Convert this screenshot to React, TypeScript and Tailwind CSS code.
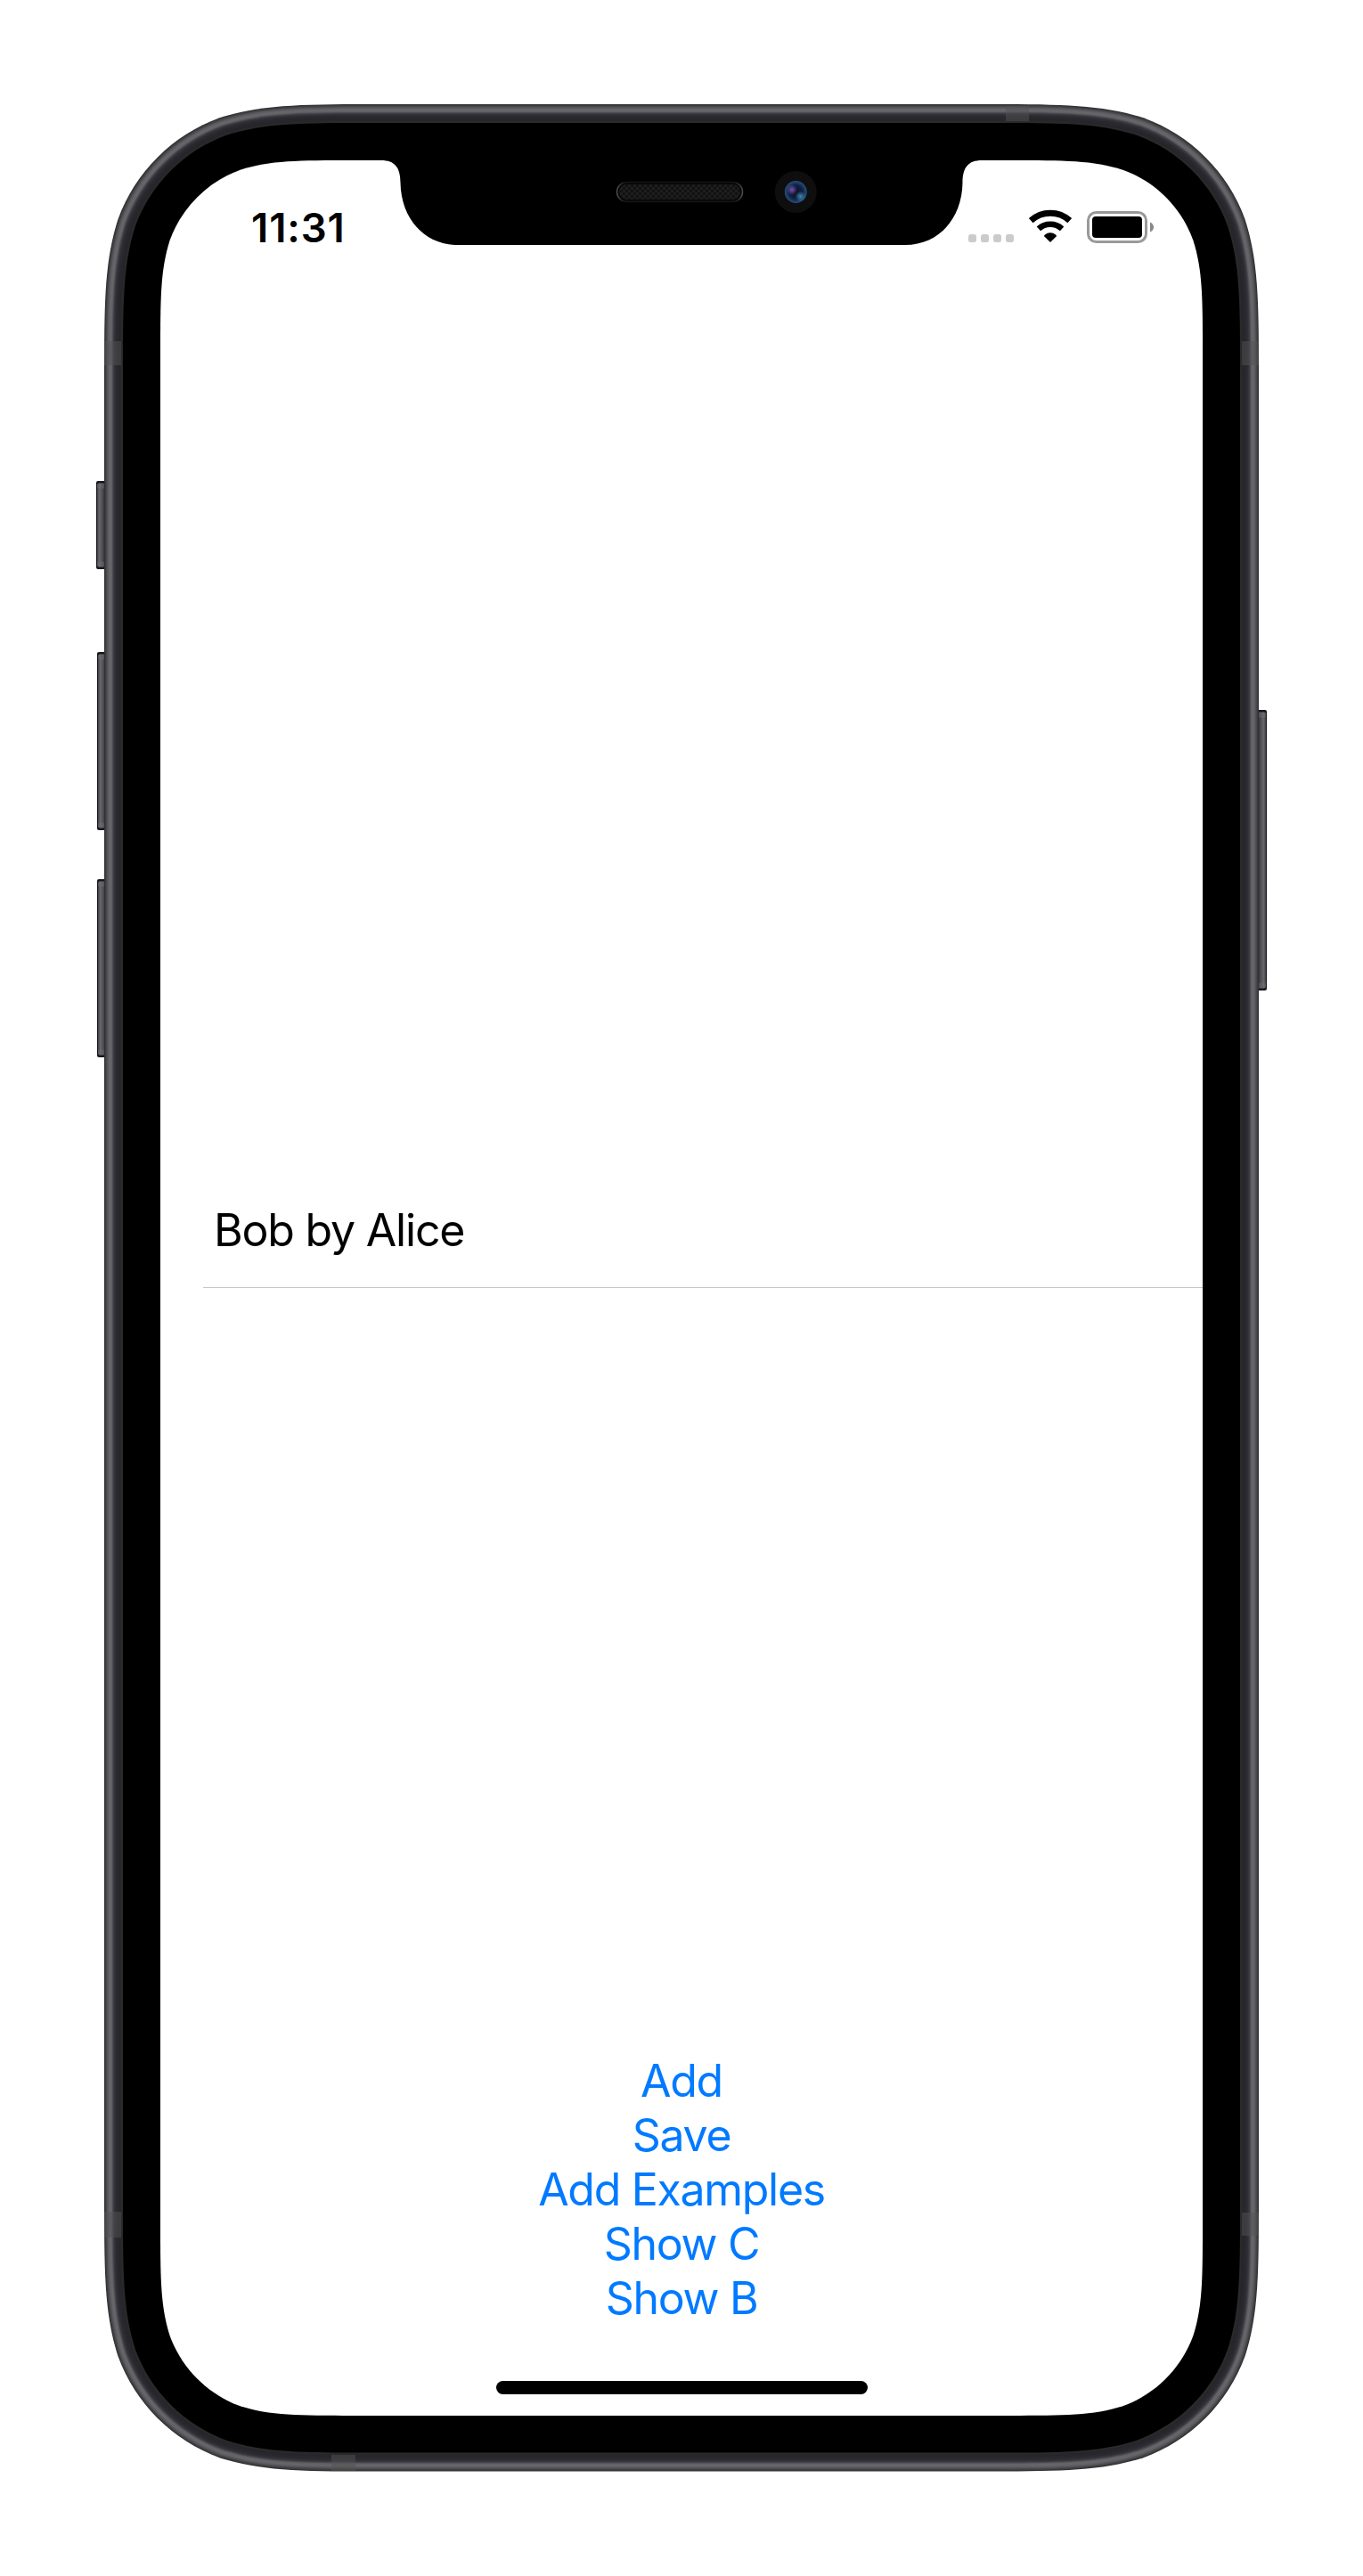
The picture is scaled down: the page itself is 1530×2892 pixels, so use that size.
import React from "react";

/** Rounded rectangle with continuous-curvature corners. */
function squircle(x: number, y: number, w: number, h: number, r: number) {
  const a = 1.52866 * r, b = 1.08849 * r, c = 0.86841 * r, d = 0.63149 * r;
  const e = 0.37282 * r, f = 0.16906 * r, g = 0.07491 * r;
  const R = x + w, B = y + h;
  return [
    `M${x + a} ${y}L${R - a} ${y}`,
    `C${R - b} ${y} ${R - c} ${y} ${R - d} ${y + g}`,
    `C${R - e} ${y + f} ${R - f} ${y + e} ${R - g} ${y + d}`,
    `C${R} ${y + c} ${R} ${y + b} ${R} ${y + a}L${R} ${B - a}`,
    `C${R} ${B - b} ${R} ${B - c} ${R - g} ${B - d}`,
    `C${R - f} ${B - e} ${R - e} ${B - f} ${R - d} ${B - g}`,
    `C${R - c} ${B} ${R - b} ${B} ${R - a} ${B}L${x + a} ${B}`,
    `C${x + b} ${B} ${x + c} ${B} ${x + d} ${B - g}`,
    `C${x + e} ${B - f} ${x + f} ${B - e} ${x + g} ${B - d}`,
    `C${x} ${B - c} ${x} ${B - b} ${x} ${B - a}L${x} ${y + a}`,
    `C${x} ${y + b} ${x} ${y + c} ${x + g} ${y + d}`,
    `C${x + f} ${y + e} ${x + e} ${y + f} ${x + d} ${y + g}`,
    `C${x + c} ${y} ${x + b} ${y} ${x + a} ${y}Z`,
  ].join("");
}

/** Metal rim shades, from the outer edge inwards, one per pixel. */
const RIM = [
  "#313133", "#3d3c3f", "#474649", "#525155", "#5c5b60", "#636267", "#67666b", "#66656a",
  "#5f5e63", "#4d4c51", "#3d3c41", "#35343a", "#2f2e34", "#2c2b31", "#2a2930", "#29282f",
  "#28272d", "#27262c", "#27272a", "#2b2b2b", "#2a2a29", "#000000",
];

const ring = (t: number) => squircle(117 + t, 117 + t, 1296 - 2 * t, 2657.5 - 2 * t, 205 - t);

function SideButton({ x, y, h, flip }: { x: number; y: number; h: number; flip?: boolean }) {
  return (
    <g transform={flip ? `translate(${x + 9} ${y}) scale(-1 1)` : `translate(${x} ${y})`}>
      <path d={`M12 0H2Q0 0 0 2V${h - 2}Q0 ${h} 2 ${h}H12Z`} fill="#17171b" />
      <rect x="1" y="2.5" width="10" height={h - 5} rx="2" fill="url(#button)" />
      <rect x="1" y="2.5" width="10" height="6" rx="2" fill="#77767b" opacity="0.35" />
      <rect x="1" y={h - 8.5} width="10" height="6" rx="2" fill="#77767b" opacity="0.35" />
    </g>
  );
}

function PhoneBody() {
  return (
    <svg className="absolute inset-0" width="1530" height="2892" viewBox="0 0 1530 2892" aria-hidden="true">
      <defs>
        <linearGradient id="button" x1="0" x2="1" y1="0" y2="0">
          <stop offset="0" stopColor="#3f3f43" />
          <stop offset="0.25" stopColor="#66656a" />
          <stop offset="0.5" stopColor="#56555a" />
          <stop offset="0.8" stopColor="#38373c" />
        </linearGradient>
        <pattern id="mesh" width="6" height="6" patternUnits="userSpaceOnUse">
          <rect width="6" height="6" fill="#121212" />
          <rect width="3" height="3" fill="#1e1e1e" />
          <rect x="3" y="3" width="3" height="3" fill="#1e1e1e" />
        </pattern>
        <linearGradient id="grille" x1="0" x2="1" y1="0" y2="0">
          <stop offset="0" stopColor="#4c4c4c" />
          <stop offset="0.06" stopColor="#141414" />
          <stop offset="0.94" stopColor="#141414" />
          <stop offset="1" stopColor="#4c4c4c" />
        </linearGradient>
        <radialGradient id="lens">
          <stop offset="0" stopColor="#0b1024" />
          <stop offset="0.6" stopColor="#10203f" />
          <stop offset="1" stopColor="#27507f" />
        </radialGradient>
        <radialGradient id="violet">
          <stop offset="0" stopColor="#7a4fb0" />
          <stop offset="1" stopColor="#7a4fb0" stopOpacity="0" />
        </radialGradient>
        <radialGradient id="cyan">
          <stop offset="0" stopColor="#3f86ad" />
          <stop offset="1" stopColor="#3f86ad" stopOpacity="0" />
        </radialGradient>
      </defs>

      <SideButton x={108} y={540} h={99} />
      <SideButton x={109} y={732} h={200} />
      <SideButton x={109} y={987} h={200} />
      <SideButton x={1413} y={797} h={315} flip />

      {RIM.map((color, t) => (
        <path key={t} d={ring(t)} fill={color} />
      ))}

      <g fill="#525252" opacity="0.5">
        <rect x="117" y="383" width="19" height="27" />
        <rect x="1394" y="383" width="19" height="27" />
        <rect x="117" y="2483" width="19" height="29" />
        <rect x="1394" y="2484" width="19" height="26" />
        <rect x="1129" y="119" width="26" height="17" />
        <rect x="372" y="2756" width="27" height="18" />
      </g>

      <path d={squircle(180, 180, 1170, 2532, 142)} fill="#fff" />
      <path
        d="M424 179V180H428C443 180 449.500 188 449.500 205C450 245 476 275 514 275H1016C1054 275 1080 245 1080.500 205C1080.500 188 1087 180 1102 180H1106V179Z"
        fill="#000"
      />

      <rect x="692.500" y="204.500" width="141" height="22" rx="11" fill="#070707" stroke="url(#grille)" strokeWidth="1.500" />
      <rect x="695" y="207" width="136" height="17" rx="8.500" fill="url(#mesh)" />
      <circle cx="893.300" cy="215.500" r="23.500" fill="#0e0e0e" />
      <circle cx="893.300" cy="215.500" r="12.500" fill="url(#lens)" />
      <circle cx="889" cy="213" r="6" fill="url(#violet)" />
      <circle cx="898.500" cy="220.500" r="6" fill="url(#cyan)" />
    </svg>
  );
}

function StatusIcons() {
  return (
    <svg className="mt-0.5" width="210" height="38" viewBox="0 0 210 38" aria-label="Status">
      <g fill="#cbcbcb">
        <rect x="2" y="28" width="9" height="9" rx="2.800" />
        <rect x="16" y="28" width="9" height="9" rx="2.800" />
        <rect x="30" y="28" width="9" height="9" rx="2.800" />
        <rect x="44" y="28" width="9" height="9" rx="2.800" />
      </g>
      <g transform="translate(94 37)">
        <path d="M-21.800 -24.300A32.500 32.500 0 0 1 21.800 -24.300" fill="none" stroke="#000" strokeWidth="7" />
        <path d="M-13.100 -15.200A19.400 19.400 0 0 1 13.100 -15.200" fill="none" stroke="#000" strokeWidth="6.500" />
        <path d="M0 0L-6.600 -6.500Q-7.400 -7.300 -6.400 -8.300Q0 -13.200 6.400 -8.300Q7.400 -7.300 6.600 -6.500Z" fill="#000" />
      </g>
      <rect x="136.500" y="3.500" width="65" height="33" rx="9" fill="none" stroke="#999" strokeWidth="3" />
      <rect x="141" y="8" width="56" height="24" rx="4" fill="#000" />
      <path d="M206 14.500Q210 16.500 210 20Q210 23.500 206 25.500Z" fill="#888" />
    </svg>
  );
}

const ACTIONS = ["Add", "Save", "Add Examples", "Show C", "Show B"];

export default function App() {
  return (
    <div className="relative h-[2892px] w-[1530px] overflow-hidden bg-white font-[Inter,sans-serif] text-black">
      <PhoneBody />
      <main className="relative mx-auto mt-[180px] flex h-[2532px] w-[1170px] flex-col">
        <header className="flex h-[132px] items-start justify-between pl-[102px] pr-[55px] pt-[53px]">
          <time className="text-[45.5px] font-semibold leading-[45px] tracking-[0.9px]">11:31</time>
          <StatusIcons />
        </header>
        <ul className="flex grow flex-col pt-[1008px]">
          <li className="ml-12 h-[126px] border-b border-[#c6c6c8] pl-3 text-[50px] leading-[122px] tracking-[-1.2px]">
            Bob by Alice
          </li>
        </ul>
        <div className="flex h-[367px] flex-col items-center">
          {ACTIONS.map((label) => (
            <button key={label} className="h-[61px] text-[50px] leading-[61px] tracking-[-1.3px] text-[#007aff]">
              {label}
            </button>
          ))}
        </div>
        <div className="mx-auto mb-6 h-[15px] w-[417px] shrink-0 rounded-full bg-black" />
      </main>
    </div>
  );
}
